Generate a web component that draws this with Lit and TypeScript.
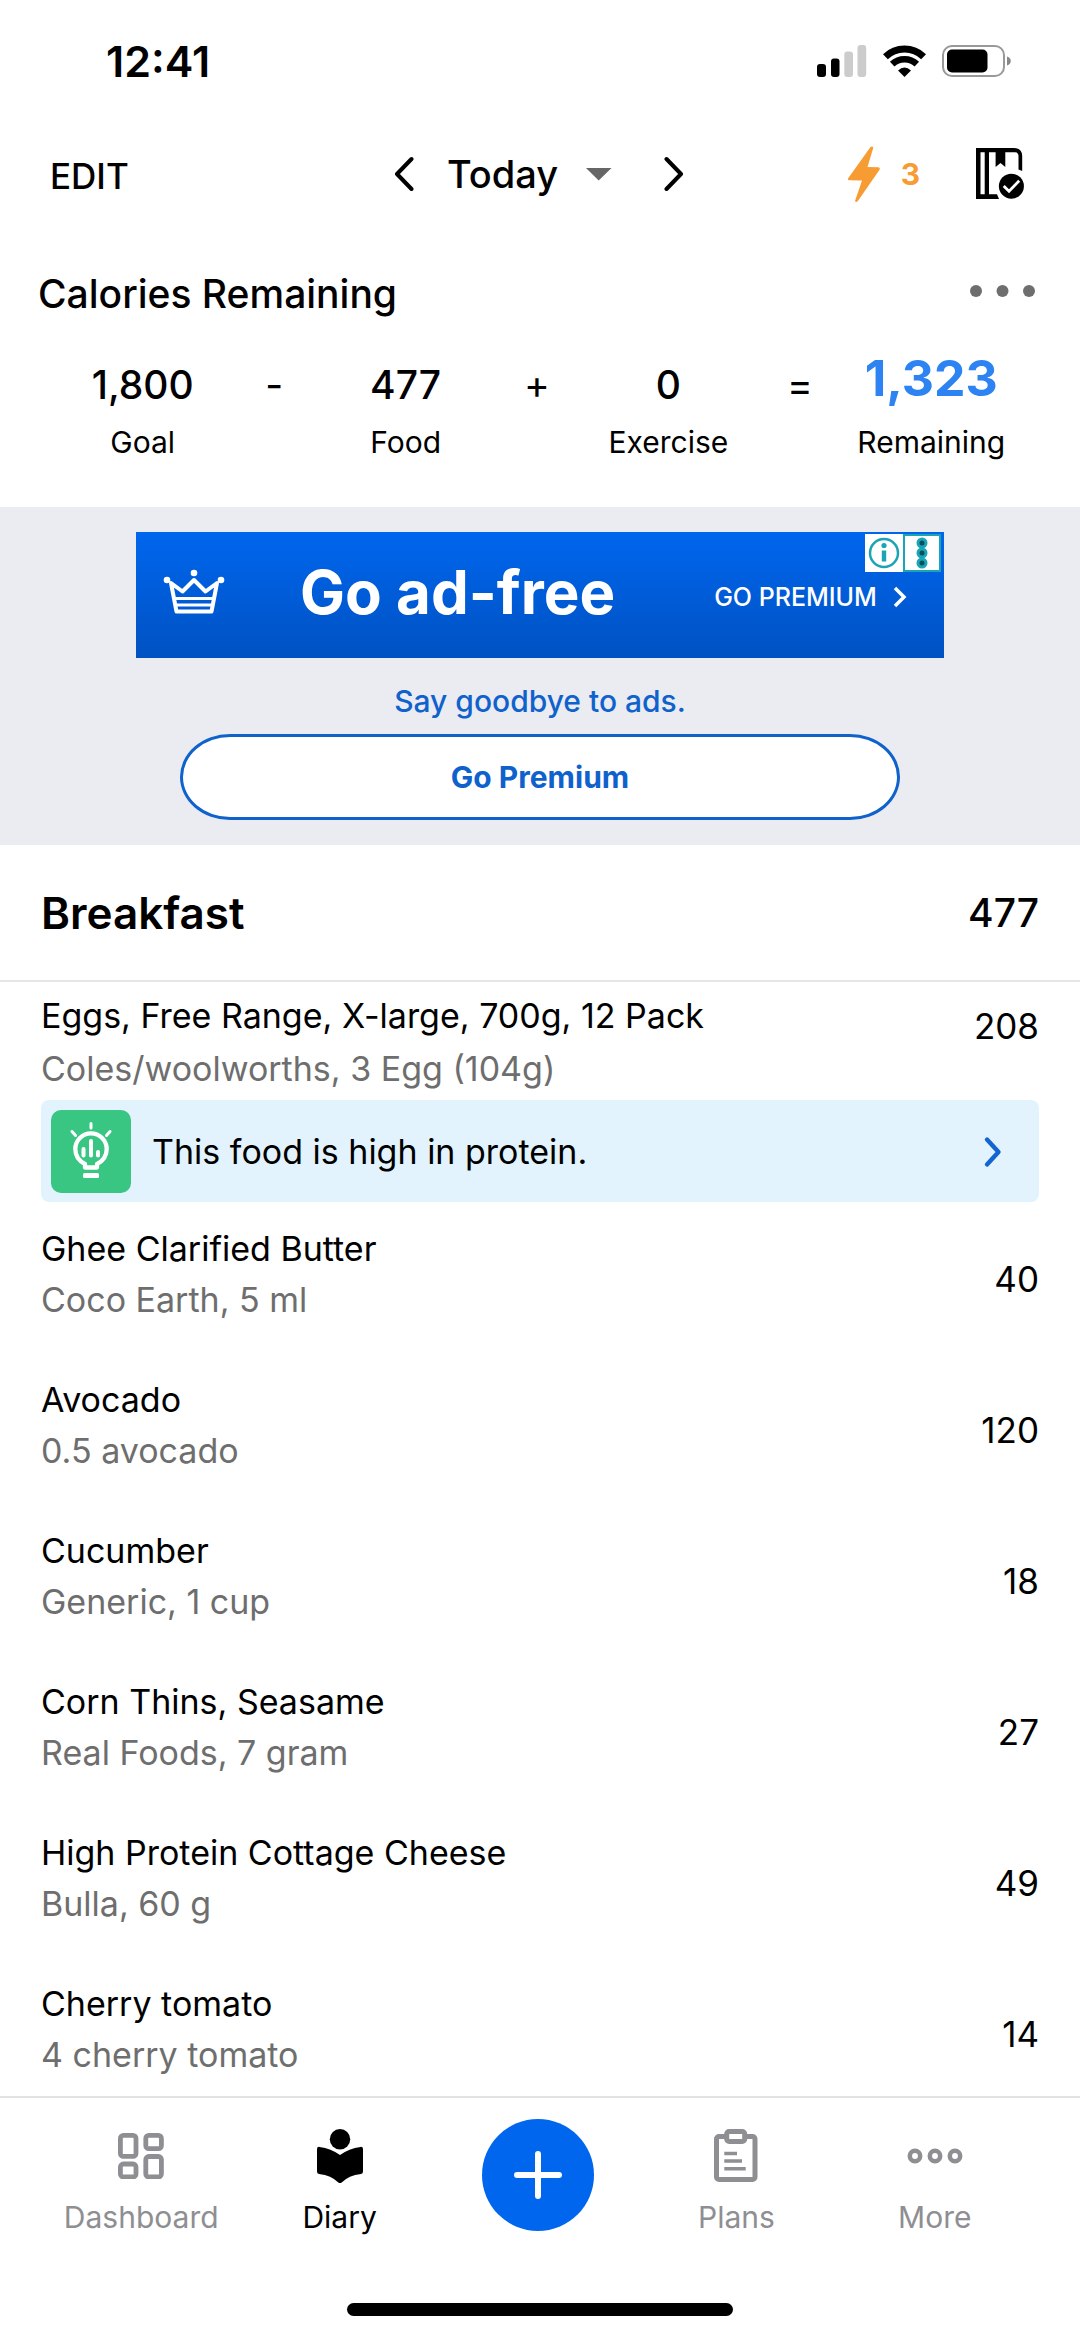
import { LitElement, html, svg, css, nothing } from "lit";
import { customElement, property } from "lit/decorators.js";
import { classMap } from "lit/directives/class-map.js";

interface Food {
  name: string;
  detail: string;
  kcal: number;
  insight?: string;
}

interface Stat {
  value: string;
  label: string;
  total?: boolean;
}

const FOODS: Food[] = [
  {
    name: "Eggs, Free Range, X-large, 700g, 12 Pack",
    detail: "Coles/woolworths, 3 Egg (104g)",
    kcal: 208,
    insight: "This food is high in protein.",
  },
  { name: "Ghee Clarified Butter", detail: "Coco Earth, 5 ml", kcal: 40 },
  { name: "Avocado", detail: "0.5 avocado", kcal: 120 },
  { name: "Cucumber", detail: "Generic, 1 cup", kcal: 18 },
  { name: "Corn Thins, Seasame", detail: "Real Foods, 7 gram", kcal: 27 },
  { name: "High Protein Cottage Cheese", detail: "Bulla, 60 g", kcal: 49 },
  { name: "Cherry tomato", detail: "4 cherry tomato", kcal: 14 },
];

const EQUATION: (Stat | string)[] = [
  { value: "1,800", label: "Goal" },
  "-",
  { value: "477", label: "Food" },
  "+",
  { value: "0", label: "Exercise" },
  "=",
  { value: "1,323", label: "Remaining", total: true },
];

const icon = (width: number, height: number, body: unknown) =>
  html`<svg width=${width} height=${height} viewBox="0 0 ${width} ${height}" fill="none" aria-hidden="true">${body}</svg>`;

const signalIcon = icon(50, 32, svg`
  <rect x="0" y="19" width="9" height="13" rx="3" fill="#000"/>
  <rect x="14" y="13.5" width="8.5" height="18.5" rx="3" fill="#000"/>
  <rect x="27.3" y="6.5" width="8.7" height="25.5" rx="3" fill="#ccc"/>
  <rect x="40.5" y="0" width="8.7" height="32" rx="3" fill="#ccc"/>`);

const wifiIcon = icon(43, 32, svg`
  <path d="M2.4 11.7A27.5 27.5 0 0 1 40.6 11.7" stroke="#000" stroke-width="7"/>
  <path d="M9.2 19.2A17.7 17.7 0 0 1 33.8 19.2" stroke="#000" stroke-width="6.5"/>
  <path d="M21.5 32 15 25.5Q21.5 19.5 28 25.5Z" fill="#000"/>`);

const batteryIcon = icon(70, 32, svg`
  <rect x="1" y="1" width="61" height="30" rx="9" stroke="#999" stroke-width="2"/>
  <rect x="5" y="4.5" width="40.5" height="23" rx="5" fill="#000"/>
  <path d="M65 11.5C70 13 70 19 65 20.5Z" fill="#888"/>`);

const chevronLeft = icon(20, 36, svg`
  <path d="M17.5 3 3 18l14.5 15" stroke="#000" stroke-width="4" stroke-linecap="round" stroke-linejoin="round"/>`);

const chevronRight = icon(20, 36, svg`
  <path d="M2.5 3 17 18 2.5 33" stroke="#000" stroke-width="4" stroke-linecap="round" stroke-linejoin="round"/>`);

const caretDown = icon(26, 13, svg`<path d="M0 0h25.5L12.7 12.6Z" fill="#666"/>`);

const boltIcon = icon(34, 58, svg`
  <path d="M23.5 2 1 33.5Q.4 35 2 35.3L15 35.5 8 56Q9 57.8 10.7 56.2L32.7 24.5Q33.3 22.7 31.5 22.3L20.5 22 26.3 2.8Q25.5.5 23.5 2Z" fill="#f79c33"/>`);

const bookIcon = icon(52, 52, svg`
  <path d="M0 0H38Q46.2 0 46.2 8V23L42.5 21.5V8Q42.5 4.3 39 4.3H29.3V19L24.5 15 19.6 19V4.3H13V46.3H21L23 51H0ZM4.5 4.3V46.3H8.7V4.3Z" fill="#000" fill-rule="evenodd"/>
  <circle cx="35.4" cy="38.2" r="12.5" fill="#000"/>
  <path d="M27.7 38 33 43.2 43.2 32.8" stroke="#fff" stroke-width="2.8"/>`);

const dotsIcon = icon(66, 42, svg`
  <g fill="#6e6e6e"><circle cx="6" cy="21" r="6"/><circle cx="32.5" cy="21" r="6"/><circle cx="59" cy="21" r="6"/></g>`);

const crownIcon = icon(62, 46, svg`
  <g stroke="#fff" stroke-width="4" stroke-linejoin="round">
    <path d="M8 14 19.5 22.5 31 11 42.5 22.5 54 14 48.5 42.5H13.5Z"/>
    <path d="M11 29.5H51M12 36H50" stroke-width="3"/>
  </g>
  <g fill="#fff"><circle cx="31" cy="4" r="3.3"/><circle cx="4" cy="11" r="3.3"/><circle cx="58" cy="11" r="3.3"/></g>`);

const smallChevron = icon(14, 24, svg`<path d="M2 3 11 12 2 21" stroke="#fff" stroke-width="3.5"/>`);

const adInfoIcon = icon(38, 38, svg`
  <rect width="38" height="38" fill="#fff"/>
  <circle cx="19" cy="19" r="14" stroke="#19a5b5" stroke-width="2.5"/>
  <circle cx="19" cy="11.5" r="2.6" fill="#19a5b5"/>
  <path d="M19 16.5V27.5" stroke="#19a5b5" stroke-width="4.4"/>`);

const adMenuIcon = icon(38, 38, svg`
  <rect x="1" y="1" width="36" height="36" fill="#fff" stroke="#19a5b5" stroke-width="2"/>
  <g fill="#0c4f5c" stroke="#19a5b5" stroke-width="3"><circle cx="19" cy="9" r="4"/><circle cx="19" cy="19" r="4"/><circle cx="19" cy="29" r="4"/></g>`);

const bulbIcon = icon(80, 83, svg`
  <g stroke="#fff" stroke-linecap="round">
    <path d="M40 13.5V18M21 21.5 24.5 25.5M59 21.5 55.5 25.5" stroke-width="3"/>
    <path d="M32.5 39V45.5M40 31V45.5M47 42V45.5" stroke-width="4"/>
    <path d="M34 57.5V54Q24.3 49 24.3 39A15.7 15.7 0 0 1 55.7 39Q55.7 49 46 54V57.5Z" stroke-width="4.3" stroke-linejoin="round"/>
  </g>
  <rect x="32" y="63" width="16" height="5" rx="1.5" fill="#fff"/>`);

const insightChevron = icon(20, 32, svg`
  <path d="M4 3.5 15.5 16 4 28.5" stroke="#1565d0" stroke-width="4.4" stroke-linecap="round" stroke-linejoin="round"/>`);

const dashboardIcon = icon(46, 46, svg`
  <g stroke="currentColor" stroke-width="4.8">
    <rect x="2.4" y="2.4" width="15.6" height="21" rx="3"/>
    <rect x="27.8" y="2.4" width="15.6" height="13.3" rx="3"/>
    <rect x="2.4" y="31" width="15.6" height="13" rx="3"/>
    <rect x="27.8" y="23.5" width="15.6" height="20.5" rx="3"/>
  </g>`);

const diaryIcon = icon(46, 54, svg`
  <circle cx="23" cy="10.2" r="10.2" fill="currentColor"/>
  <path d="M0 20Q0 17.6 2.5 17.9 14 19.3 23 26 32 19.3 43.5 17.9 46 17.6 46 20V42.5Q46 44.6 44 45 31.5 46.6 25 53.3 23 54.8 21 53.3 14.5 46.6 2 45 0 44.6 0 42.5Z" fill="currentColor"/>`);

const plansIcon = icon(44, 54, svg`
  <g stroke="currentColor">
    <rect x="2.5" y="7.5" width="38.5" height="43" rx="2.5" stroke-width="5"/>
    <path d="M10.3 24.5H23M10.3 32H28M10.3 39.8H31.7" stroke-width="3.4"/>
    <rect x="12.7" y="2.5" width="18" height="10" rx="2.5" stroke-width="5" fill="#fff"/>
  </g>`);

const moreIcon = icon(56, 16, svg`
  <g stroke="currentColor" stroke-width="4.5"><circle cx="8" cy="8" r="5.2"/><circle cx="28" cy="8" r="5.2"/><circle cx="48" cy="8" r="5.2"/></g>`);

const plusIcon = icon(48, 48, svg`
  <path d="M24 3V45M3 24H45" stroke="#fff" stroke-width="6" stroke-linecap="round"/>`);

const reset = css`
  :host {
    display: block;
  }
  * {
    box-sizing: border-box;
  }
  svg {
    display: block;
    flex: none;
  }
  button {
    margin: 0;
    padding: 0;
    border: 0;
    background: none;
    color: inherit;
    font: inherit;
    cursor: pointer;
  }
  a {
    color: inherit;
    text-decoration: none;
  }
`;

@customElement("status-bar")
class StatusBar extends LitElement {
  static styles = [
    reset,
    css`
      .bar {
        display: flex;
        align-items: center;
        justify-content: space-between;
        height: 122px;
        padding: 0 68px 0 106px;
      }
      .time {
        font-size: 43px;
        font-weight: 600;
        line-height: 50px;
      }
      .indicators {
        display: flex;
        align-items: center;
        gap: 16px;
      }
    `,
  ];
  render() {
    return html`<div class="bar">
      <time class="time">12:41</time>
      <div class="indicators">${signalIcon}${wifiIcon}${batteryIcon}</div>
    </div>`;
  }
}

@customElement("diary-header")
class DiaryHeader extends LitElement {
  static styles = [
    reset,
    css`
      .header {
        display: grid;
        grid-template-columns: 1fr auto 1fr;
        align-items: center;
        height: 104px;
        padding: 0 52px 0 50px;
        font-weight: 500;
      }
      .edit {
        justify-self: start;
        padding-top: 4px;
        font-size: 35px;
        line-height: 48px;
      }
      .days {
        display: flex;
        align-items: center;
      }
      .day {
        display: flex;
        align-items: center;
        gap: 28px;
        padding: 0 52px 0 33px;
        font-size: 38px;
        line-height: 48px;
      }
      .actions {
        display: flex;
        align-items: center;
        justify-self: end;
        gap: 56px;
      }
      .streak {
        display: flex;
        align-items: center;
        gap: 20px;
        color: #f79c33;
        font-size: 30px;
        font-weight: 700;
        line-height: 48px;
      }
    `,
  ];
  render() {
    return html`<header class="header">
      <button class="edit">EDIT</button>
      <div class="days">
        <button aria-label="Previous day">${chevronLeft}</button>
        <button class="day">Today ${caretDown}</button>
        <button aria-label="Next day">${chevronRight}</button>
      </div>
      <div class="actions">
        <button class="streak">${boltIcon}3</button>
        <button aria-label="Complete diary">${bookIcon}</button>
      </div>
    </header>`;
  }
}

@customElement("calorie-summary")
class CalorieSummary extends LitElement {
  static styles = [
    reset,
    css`
      .summary {
        padding: 44px 38px 47px;
      }
      .top {
        display: flex;
        align-items: flex-start;
        justify-content: space-between;
      }
      .title {
        margin: 0;
        font-size: 39px;
        font-weight: 500;
        line-height: 48px;
      }
      .more {
        padding-right: 6px;
      }
      .equation {
        display: grid;
        grid-template-columns: repeat(7, minmax(0, 1fr));
        margin-top: 39px;
        padding: 0 45px 0 39px;
      }
      .stat,
      .operator {
        display: flex;
        flex-direction: column;
        align-items: center;
        gap: 11px;
      }
      .value,
      .operator {
        font-size: 39px;
        font-weight: 500;
        line-height: 56px;
      }
      .value {
        height: 56px;
      }
      .operator {
        font-weight: 400;
      }
      .total {
        color: #2c83f1;
        font-size: 50px;
        font-weight: 700;
        line-height: 42px;
      }
      .label {
        font-size: 30px;
        line-height: 36px;
      }
    `,
  ];
  render() {
    return html`<section class="summary">
      <div class="top">
        <h2 class="title">Calories Remaining</h2>
        <button class="more" aria-label="Summary options">${dotsIcon}</button>
      </div>
      <div class="equation">
        ${EQUATION.map((part) =>
          typeof part === "string"
            ? html`<span class="operator">${part}</span>`
            : html`<div class="stat">
                <span class=${classMap({ value: true, total: !!part.total })}>${part.value}</span>
                <span class="label">${part.label}</span>
              </div>`,
        )}
      </div>
    </section>`;
  }
}

@customElement("premium-promo")
class PremiumPromo extends LitElement {
  static styles = [
    reset,
    css`
      .promo {
        display: flex;
        flex-direction: column;
        align-items: center;
        padding: 25px 0;
        background: #ebebf2;
        color: #0f62cc;
        font-size: 30px;
      }
      .banner {
        position: relative;
        width: 74.8%;
        color: #fff;
      }
      .offer {
        display: grid;
        grid-template-columns: auto 1fr auto auto;
        align-items: center;
        height: 126px;
        padding: 0 37px 6px 27px;
        background: linear-gradient(#0066ee, #0052c2);
      }
      .headline {
        padding-right: 24px;
        text-align: center;
        font-size: 60px;
        font-weight: 700;
        line-height: 72px;
      }
      .cta {
        padding: 10px 16px 0 0;
        font-size: 25px;
        font-weight: 500;
        line-height: 30px;
      }
      .arrow {
        padding-top: 10px;
      }
      .badges {
        position: absolute;
        top: 2px;
        right: 3px;
        display: flex;
      }
      .tagline {
        margin: 21px 0 11px;
        font-weight: 500;
        line-height: 44px;
      }
      .upgrade {
        width: 66.667%;
        height: 86px;
        border: 3px solid #0f62cc;
        border-radius: 50px / 43px;
        background: #fff;
        font-weight: 700;
      }
    `,
  ];
  render() {
    return html`<section class="promo">
      <div class="banner">
        <a class="offer" href="#premium">
          ${crownIcon}
          <span class="headline">Go ad-free</span>
          <span class="cta">GO PREMIUM</span>
          <span class="arrow">${smallChevron}</span>
        </a>
        <div class="badges">
          <button aria-label="Ad information">${adInfoIcon}</button>
          <button aria-label="Ad options">${adMenuIcon}</button>
        </div>
      </div>
      <p class="tagline">Say goodbye to ads.</p>
      <button class="upgrade">Go Premium</button>
    </section>`;
  }
}

@customElement("food-row")
class FoodRow extends LitElement {
  @property({ attribute: false }) food!: Food;

  static styles = [
    reset,
    css`
      .food {
        display: grid;
        grid-template-columns: 1fr auto;
        align-items: center;
        min-height: 151px;
        padding: 0 41px;
        font-size: 34px;
        line-height: 50px;
      }
      .text {
        display: flex;
        flex-direction: column;
        gap: 1px;
        padding-bottom: 9px;
      }
      .detail {
        color: #6e6e6e;
      }
      .featured {
        align-items: start;
        padding-top: 9px;
        padding-bottom: 1px;
      }
      .featured .text {
        gap: 3px;
        padding-bottom: 6px;
      }
      .featured .kcal {
        padding-top: 10px;
      }
      .kcal {
        font-size: 35px;
      }
      .insight {
        display: flex;
        grid-column: 1 / -1;
        align-items: center;
        gap: 21px;
        padding: 10px 36px 9px 10px;
        border-radius: 8px;
        background: #e2f3fe;
        text-align: left;
      }
      .tile {
        border-radius: 10px;
        background: #38c682;
      }
      .message {
        flex: 1;
      }
    `,
  ];
  render() {
    const { name, detail, kcal, insight } = this.food;
    return html`<div class=${classMap({ food: true, featured: !!insight })}>
      <div class="text">
        <span>${name}</span>
        <span class="detail">${detail}</span>
      </div>
      <span class="kcal">${kcal}</span>
      ${insight
        ? html`<button class="insight">
            <span class="tile">${bulbIcon}</span>
            <span class="message">${insight}</span>
            ${insightChevron}
          </button>`
        : nothing}
    </div>`;
  }
}

@customElement("meal-section")
class MealSection extends LitElement {
  static styles = [
    reset,
    css`
      .heading {
        display: flex;
        align-items: center;
        justify-content: space-between;
        height: 137px;
        padding: 0 41px;
        border-bottom: 2px solid #e6e6e6;
      }
      .name {
        margin: 0;
        font-size: 44px;
        font-weight: 600;
        line-height: 56px;
      }
      .total {
        font-size: 39px;
        font-weight: 500;
        line-height: 56px;
      }
      .foods {
        margin: 0;
        padding: 0;
        list-style: none;
      }
    `,
  ];
  render() {
    return html`<section>
      <div class="heading">
        <h2 class="name">Breakfast</h2>
        <span class="total">477</span>
      </div>
      <ul class="foods">
        ${FOODS.map((food) => html`<li><food-row .food=${food}></food-row></li>`)}
      </ul>
    </section>`;
  }
}

@customElement("tab-bar")
class TabBar extends LitElement {
  static styles = [
    reset,
    css`
      .bar {
        border-top: 2px solid #e2e2e2;
        background: #fff;
      }
      .tabs {
        display: grid;
        grid-template-columns: repeat(5, minmax(0, 1fr));
        align-items: start;
        padding: 0 46px 0 42px;
      }
      .tab {
        display: flex;
        flex-direction: column;
        align-items: center;
        gap: 15px;
        padding-top: 30px;
        color: #8e8e93;
        font-size: 30px;
        line-height: 36px;
      }
      .active {
        color: #000;
      }
      .icon {
        display: flex;
        align-items: center;
        height: 56px;
      }
      .add {
        display: grid;
        place-items: center;
        justify-self: center;
        width: 112px;
        height: 112px;
        margin-top: 21px;
        border-radius: 50%;
        background: #0066ee;
      }
      .home {
        width: 386px;
        height: 13px;
        margin: 68px auto 20px;
        border-radius: 7px;
        background: #000;
      }
    `,
  ];
  private tab(label: string, glyph: unknown, active = false) {
    return html`<a class=${classMap({ tab: true, active })} href="#${label.toLowerCase()}">
      <span class="icon">${glyph}</span>${label}
    </a>`;
  }
  render() {
    return html`<nav class="bar">
      <div class="tabs">
        ${this.tab("Dashboard", dashboardIcon)}
        ${this.tab("Diary", diaryIcon, true)}
        <button class="add" aria-label="Add entry">${plusIcon}</button>
        ${this.tab("Plans", plansIcon)}
        ${this.tab("More", moreIcon)}
      </div>
      <div class="home"></div>
    </nav>`;
  }
}

@customElement("app-root")
class AppRoot extends LitElement {
  static styles = [
    reset,
    css`
      .screen {
        display: flex;
        flex-direction: column;
        height: 100vh;
        background: #fff;
        color: #000;
        font-family: Inter, "Liberation Sans", sans-serif;
      }
      .content {
        flex: 1;
        min-height: 0;
        overflow-y: auto;
        scrollbar-width: none;
      }
    `,
  ];
  render() {
    return html`<div class="screen">
      <status-bar></status-bar>
      <diary-header></diary-header>
      <main class="content">
        <calorie-summary></calorie-summary>
        <premium-promo></premium-promo>
        <meal-section></meal-section>
      </main>
      <tab-bar></tab-bar>
    </div>`;
  }
}
